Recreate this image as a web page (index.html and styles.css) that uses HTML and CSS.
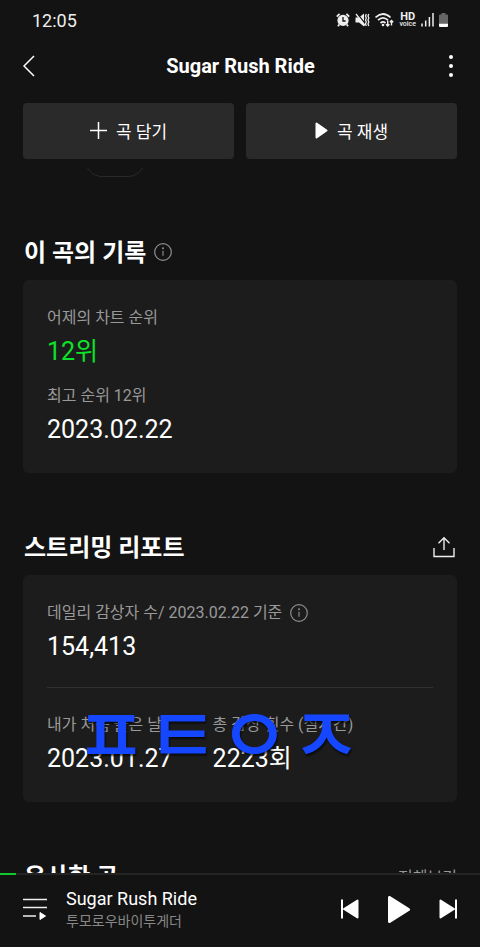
FILE: index.html
```html
<!DOCTYPE html>
<html lang="ko">
<head>
<meta charset="utf-8">
<meta name="viewport" content="width=device-width, initial-scale=1">
<title>Sugar Rush Ride</title>
<link rel="stylesheet" href="styles.css">
</head>
<body>
<div class="status">
  <time class="clock">12:05</time>
  <div class="status-icons">
    <svg width="14" height="14" viewBox="0 0 14 14"><circle cx="7" cy="7.4" r="5.6" fill="#eee"/><path d="M.8 3.600 3.600.8M13.200 3.600 10.400.8M3.200 11.400 2 13.200M10.800 11.400 12 13.200" stroke="#eee" stroke-width="1.800"/><path d="M7 4v4h2.600" fill="none" stroke="#131313" stroke-width="1.300"/></svg>
    <svg width="15" height="14" viewBox="0 0 15 14"><path d="M.5 4.600H4L9 .5v13L4 9.600H.5z" fill="#eee"/><path d="M2 .5 10 10.500" stroke="#131313" stroke-width="1.300"/><path d="M1 1 10 12.500" stroke="#eee" stroke-width="1.300"/><path d="m11.300 1-.8 2 .8 2-.8 2 .8 2-.8 2 .8 2M13.800 1l-.8 2 .8 2-.8 2 .8 2-.8 2 .8 2" fill="none" stroke="#eee" stroke-width="1.300"/></svg>
    <svg width="19" height="14" viewBox="0 0 19 14"><path d="M.5 4.500Q8-2.500 15.500 4.500M3 7.200q5-4.600 10 0M5.500 10q2.500-2.200 5 0" fill="none" stroke="#eee" stroke-width="1.700"/><circle cx="8" cy="12" r="1.300" fill="#eee"/><path d="M12.700 7.500V13M11 11.200 12.700 13l1.700-1.800M16.500 12.500V7.500M14.800 9.200l1.700-1.800 1.700 1.800" fill="none" stroke="#eee" stroke-width="1.400"/></svg>
    <span class="hd"><b>HD</b><small>voice</small></span>
    <svg width="13" height="14" viewBox="0 0 13 14"><path d="M1 13.500v-3M4.700 13.500v-6M8.400 13.500v-9.500M12 13.500V0" stroke="#eee" stroke-width="1.500"/></svg>
    <svg width="9" height="14" viewBox="0 0 9 14"><path d="M2.500 0h4v1.500H8a1 1 0 0 1 1 1V11H0V2.500a1 1 0 0 1 1-1h1.500z" fill="#666"/><path d="M0 10.700h9V13a1 1 0 0 1-1 1H1a1 1 0 0 1-1-1z" fill="#fff"/></svg>
  </div>
</div>
<header class="topbar">
  <button class="icon-btn" aria-label="뒤로"><svg width="12" height="22" viewBox="0 0 12 22"><path d="M11 1 1 11l10 10" fill="none" stroke="#fff" stroke-width="1.500"/></svg></button>
  <h1>Sugar Rush Ride</h1>
  <button class="icon-btn menu" aria-label="더보기"><svg width="4" height="24" viewBox="0 0 4 24"><g fill="#fff"><circle cx="2" cy="3" r="2"/><circle cx="2" cy="12" r="2"/><circle cx="2" cy="21" r="2"/></g></svg></button>
</header>
<div class="actions">
  <button class="action"><svg width="17" height="17" viewBox="0 0 17 17"><path d="M8.500 0v17M0 8.500h17" stroke="#fff" stroke-width="1.500"/></svg>곡 담기</button>
  <button class="action"><svg width="13" height="17" viewBox="0 0 13 17"><path d="M1.500 1.500v14l10-7z" fill="#fff" stroke="#fff" stroke-width="2" stroke-linejoin="round"/></svg>곡 재생</button>
</div>
<main>
  <div class="chip"></div>
  <section>
    <div class="heading"><h2>이 곡의 기록</h2>
      <svg width="18" height="18" viewBox="0 0 18 18"><circle cx="9" cy="9" r="8.300" fill="none" stroke="#8c8c8c" stroke-width="1.200"/><path d="M9 7.800v5" stroke="#8c8c8c" stroke-width="1.200"/><circle cx="9" cy="5.300" r="1" fill="#8c8c8c"/></svg>
    </div>
    <dl class="card">
      <div><dt>어제의 차트 순위</dt><dd class="green">12위</dd></div>
      <div><dt>최고 순위 12위</dt><dd>2023.02.22</dd></div>
    </dl>
  </section>
  <section>
    <div class="heading"><h2>스트리밍 리포트</h2>
      <button class="icon-btn share" aria-label="공유"><svg width="22" height="22" viewBox="0 0 22 22"><path d="M1 12v8.500h20V12M11 14V2M5.500 7.200 11 1.700l5.500 5.500" fill="none" stroke="#eee" stroke-width="1.400"/></svg></button>
    </div>
    <dl class="card report">
      <div><dt>데일리 감상자 수/ 2023.02.22 기준 <svg width="18" height="18" viewBox="0 0 18 18"><circle cx="9" cy="9" r="8.300" fill="none" stroke="#8c8c8c" stroke-width="1.200"/><path d="M9 7.800v5" stroke="#8c8c8c" stroke-width="1.200"/><circle cx="9" cy="5.300" r="1" fill="#8c8c8c"/></svg></dt><dd>154,413</dd></div>
      <div class="pair">
        <div><dt>내가 처음 들은 날</dt><dd>2023.01.27</dd></div>
        <div><dt>총 감상 횟수 (실시간)</dt><dd>2223회</dd></div>
        <div class="mark"><span>ㅍ</span><span>ㅌ</span><span>ㅇ</span><span>ㅈ</span></div>
      </div>
    </dl>
  </section>
  <section>
    <div class="heading"><h2>유사한 곡</h2><a class="more" href="#similar">전체보기</a></div>
  </section>
</main>
<footer class="player">
  <div class="track"><div class="progress"></div></div>
  <button class="icon-btn" aria-label="재생목록"><svg width="24" height="22" viewBox="0 0 24 22"><path d="M0 1.500h24M0 9.500h24M0 18h13" stroke="#eee" stroke-width="1.500"/><path d="M17 14.500v7l5.500-3.500z" fill="#fff" stroke="#fff" stroke-linejoin="round"/></svg></button>
  <div class="song"><strong>Sugar Rush Ride</strong><span>투모로우바이투게더</span></div>
  <div class="controls">
    <button class="icon-btn" aria-label="이전 곡"><svg width="18" height="20" viewBox="0 0 18 20"><path d="M1 0.500v19" stroke="#fff" stroke-width="2"/><path d="M16.500 1.500v17L3 10z" fill="#fff" stroke="#fff" stroke-width="2" stroke-linejoin="round"/></svg></button>
    <button class="icon-btn" aria-label="재생"><svg width="22" height="27" viewBox="0 0 22 27"><path d="M1.500 1.500v24l19-12z" fill="#fff" stroke="#fff" stroke-width="3" stroke-linejoin="round"/></svg></button>
    <button class="icon-btn" aria-label="다음 곡"><svg width="18" height="20" viewBox="0 0 18 20"><path d="M17 0.500v19" stroke="#fff" stroke-width="2"/><path d="M1.500 1.500v17L15 10z" fill="#fff" stroke="#fff" stroke-width="2" stroke-linejoin="round"/></svg></button>
  </div>
</footer>
</body>
</html>
```
FILE: styles.css
```css
* { box-sizing: border-box; margin: 0; padding: 0; }
body {
  height: 100vh;
  display: flex;
  flex-direction: column;
  background: #131313;
  color: #fff;
  font-family: Roboto, "Noto Sans CJK KR", sans-serif;
  overflow: hidden;
}
button { border: 0; background: none; color: inherit; font: inherit; }
svg { display: block; flex: none; }
.icon-btn { display: flex; flex: none; }
.status {
  display: flex;
  justify-content: space-between;
  align-items: center;
  height: 40px;
  padding: 0 32px;
}
.clock { font-size: 18px; color: #eee; }
.status-icons { display: flex; align-items: center; gap: 5px; }
.hd { display: flex; flex-direction: column; color: #eee; text-align: center; }
.hd b { font-size: 11px; line-height: 8px; }
.hd small { font-size: 7px; font-weight: 500; line-height: 6px; }
.topbar {
  display: flex;
  justify-content: space-between;
  align-items: center;
  height: 52px;
  padding: 0 24px 0 23px;
}
.menu { padding: 0 3px; }
h1 { font-size: 20px; font-weight: 700; line-height: 24px; }
.actions { display: flex; gap: 12px; padding: 11px 23px 9px; }
.action {
  flex: 1;
  display: flex;
  align-items: center;
  justify-content: center;
  gap: 9px;
  height: 56px;
  padding-bottom: 2px;
  border-radius: 4px;
  background: #2a2a2a;
  font-size: 17px;
}
main { flex: 1; min-height: 0; overflow: hidden; padding: 0 23px; }
.chip {
  width: 60px;
  height: 34px;
  margin: -25px 0 57px 62px;
  border: 1px solid #2a2a2a;
  border-radius: 17px;
}
.heading { display: flex; align-items: center; gap: 8px; height: 36px; padding-left: 1px; }
h2 { padding-top: 2px; font-size: 24px; font-weight: 700; line-height: 36px; }
.share, .more { margin-left: auto; }
.share { padding-right: 2px; }
.more { color: #999; font-size: 16px; text-decoration: none; }
.card {
  display: flex;
  flex-direction: column;
  gap: 10px;
  margin: 10px 0 56px;
  padding: 25px 24px 22px;
  border-radius: 6px;
  background: #1c1c1c;
}
dt {
  display: flex;
  align-items: center;
  gap: 8px;
  color: #999;
  font-size: 16px;
  line-height: 26px;
}
dd { font-size: 25px; line-height: 42px; }
.green { color: #0be32a; }
.report { gap: 19px; }
.pair {
  position: relative;
  display: flex;
  gap: 40px;
  padding-top: 24px;
  border-top: 1px solid #303030;
}
.mark {
  position: absolute;
  left: 28px;
  top: 14px;
  display: flex;
  color: #1447ff;
  font-size: 78px;
  font-weight: 500;
  line-height: 72px;
  text-shadow: 1px 2px 2px #000a;
}
.player {
  position: relative;
  display: flex;
  align-items: center;
  height: 74px;
  padding: 0 23px 2px;
  background: #131313;
}
.track { position: absolute; inset: 0 0 auto; height: 2px; background: #242424; }
.progress { width: 16px; height: 2px; background: #12c92c; }
.song { display: flex; flex-direction: column; margin-left: 19px; }
.song strong { font-size: 18px; font-weight: 400; line-height: 24px; }
.song span { color: #888; font-size: 14px; line-height: 20px; }
.controls { display: flex; align-items: center; gap: 29px; margin-left: auto; }
```
